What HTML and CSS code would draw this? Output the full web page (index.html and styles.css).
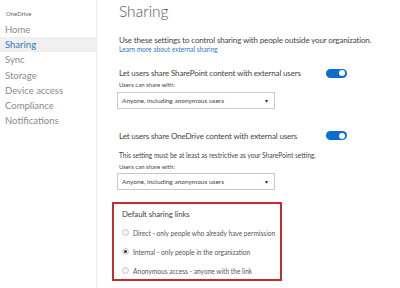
FILE: index.html
```html
<!DOCTYPE html>
<html>
<head>
    <title>OneDrive admin - Sharing</title>
    <meta charset="utf-8">
    <link rel="stylesheet" href="styles.css">
</head>
<body>
    <div class="page">
        <div class="nav">
            <div class="nav-brand">OneDrive</div>
            <div class="nav-item">Home</div>
            <div class="nav-item active">Sharing</div>
            <div class="nav-item">Sync</div>
            <div class="nav-item">Storage</div>
            <div class="nav-item">Device access</div>
            <div class="nav-item">Compliance</div>
            <div class="nav-item">Notifications</div>
        </div>

        <div class="main">
            <h1>Sharing</h1>
            <div class="intro">Use these settings to control sharing with people outside your organization.</div>
            <a class="learn-link" href="#">Learn more about external sharing</a>

            <div class="setting first">
                <div class="setting-head">
                    <span>Let users share SharePoint content with external users</span>
                    <span class="toggle"></span>
                </div>
                <div class="field-label">Users can share with:</div>
                <div class="select">Anyone, including anonymous users<span class="caret">&#9662;</span></div>
            </div>

            <div class="setting second">
                <div class="setting-head">
                    <span>Let users share OneDrive content with external users</span>
                    <span class="toggle"></span>
                </div>
                <div class="setting-note">This setting must be at least as restrictive as your SharePoint setting.</div>
                <div class="field-label">Users can share with:</div>
                <div class="select">Anyone, including anonymous users<span class="caret">&#9662;</span></div>
            </div>

            <div class="links-box">
                <div class="links-title">Default sharing links</div>
                <label class="radio-row"><span class="radio"></span>Direct - only people who already have permission</label>
                <label class="radio-row"><span class="radio checked"></span>Internal - only people in the organization</label>
                <label class="radio-row"><span class="radio"></span>Anonymous access - anyone with the link</label>
            </div>
        </div>
    </div>
</body>
</html>
```
FILE: styles.css
```css
body {
    margin: 0;
    font-family: Lato, "Noto Sans", sans-serif;
    color: #333;
    background-color: white;
}

.page {
    display: flex;
    width: 400px;
    height: 288px;
    overflow: hidden;
}

.nav {
    width: 96px;
    flex-shrink: 0;
    border-right: 1px solid #ececec;
    padding-top: 10px;
}

.nav-brand {
    font-size: 6px;
    color: #666;
    padding-left: 6px;
    margin-bottom: 5px;
}

.nav-item {
    font-size: 9.5px;
    color: #8a8a8a;
    padding-left: 5px;
    height: 15.2px;
    line-height: 15.2px;
}

.nav-item.active {
    background-color: #f0f0f0;
    color: #2b7bc0;
}

.main {
    padding-left: 22px;
}

h1 {
    font-size: 15.5px;
    font-weight: 300;
    color: #555;
    margin: 0;
    height: 22px;
    line-height: 22px;
}

.intro {
    margin-top: 13px;
    font-size: 8px;
    letter-spacing: -0.15px;
    color: #444;
    line-height: 10px;
    white-space: nowrap;
}

.learn-link {
    display: block;
    font-size: 6.6px;
    color: #2b7bc0;
    text-decoration: none;
    line-height: 8px;
}

.setting.first {
    margin-top: 13px;
}

.setting.second {
    margin-top: 20px;
}

.setting-head {
    display: flex;
    align-items: center;
    font-size: 8px;
    letter-spacing: -0.15px;
    color: #444;
    height: 14px;
}

.setting-head span:first-child {
    width: 207px;
    white-space: nowrap;
}

.toggle {
    position: relative;
    width: 21px;
    height: 9px;
    border-radius: 5px;
    background-color: #0a6ed1;
}

.toggle:before {
    position: absolute;
    content: "";
    width: 6px;
    height: 6px;
    right: 2px;
    top: 1.5px;
    border-radius: 50%;
    background-color: white;
}

.setting-note {
    margin-top: 8.5px;
    font-size: 6.6px;
    color: #444;
    white-space: nowrap;
    line-height: 9px;
}

.field-label {
    font-size: 6px;
    color: #444;
    margin-top: 1px;
    line-height: 8px;
}

.setting-note + .field-label {
    margin-top: 2.5px;
}

.select {
    display: flex;
    justify-content: space-between;
    align-items: center;
    width: 158px;
    height: 17px;
    margin-top: 2.5px;
    padding: 0 6px 0 4px;
    box-sizing: border-box;
    border: 1px solid #c8c8c8;
    font-size: 6.5px;
    color: #444;
    margin-left: -2px;
}

.caret {
    font-size: 6px;
    color: #333;
}

.links-box {
    width: 170px;
    margin-top: 12px;
    margin-left: -7px;
    padding: 5px 0 0 8px;
    height: 79px;
    box-sizing: border-box;
    border: 2px solid #c42b32;
}

.links-title {
    font-size: 7.8px;
    letter-spacing: -0.1px;
    color: #444;
    line-height: 11px;
    margin-bottom: 3.5px;
}

.radio-row {
    display: flex;
    align-items: center;
    gap: 4px;
    font-size: 6.6px;
    color: #555;
    height: 19px;
}

.radio {
    position: relative;
    width: 5px;
    height: 5px;
    border-radius: 50%;
    border: 1px solid #c8c8c8;
    background-color: #f4f4f4;
    margin-top: -2px;
}

.radio.checked:before {
    position: absolute;
    content: "";
    width: 3px;
    height: 3px;
    left: 1px;
    top: 1px;
    border-radius: 50%;
    background-color: #333;
}
```
